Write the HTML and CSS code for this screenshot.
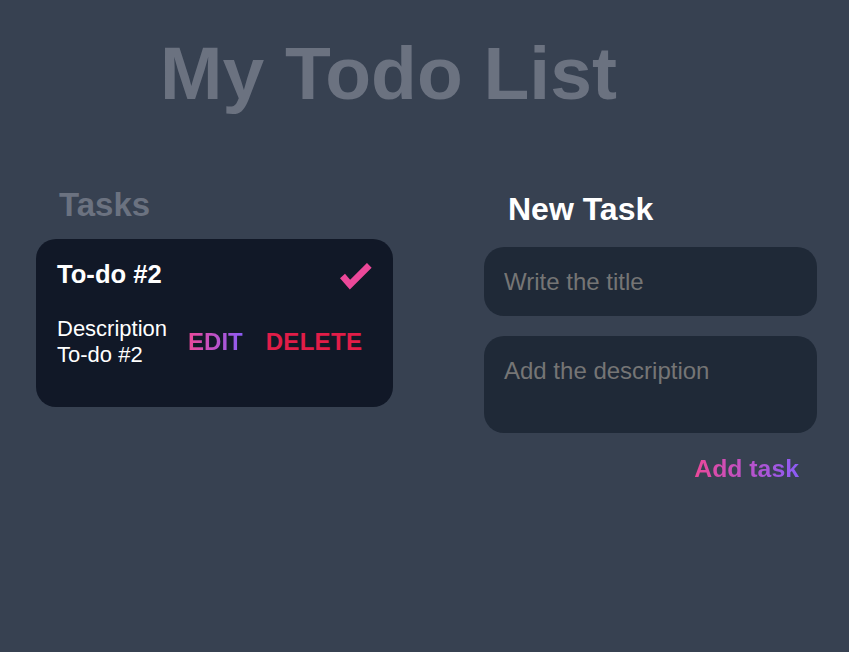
FILE: index.html
```html
<!DOCTYPE html>
<html lang="en">
<head>
<meta charset="utf-8">
<title>My Todo List</title>
<link rel="stylesheet" href="styles.css">
</head>
<body>
  <h1 class="app-title">My Todo List</h1>
  <main class="layout">
    <section class="tasks">
      <h2 class="tasks-heading">Tasks</h2>
      <article class="task-card">
        <div class="task-head">
          <h3 class="task-title">To-do #2</h3>
          <svg class="check" width="32" height="27" viewBox="0 0 32 27" aria-hidden="true">
            <polyline points="2.5,13 10,21.6 29.3,2.3" fill="none" stroke="#ec4899" stroke-width="6.6" stroke-linecap="butt" stroke-linejoin="miter"/>
          </svg>
        </div>
        <div class="task-body">
          <p class="task-desc">Description<br>To-do #2</p>
          <button class="btn-edit" type="button">EDIT</button>
          <button class="btn-delete" type="button">DELETE</button>
        </div>
      </article>
    </section>
    <section class="new-task">
      <h2 class="new-heading">New Task</h2>
      <input class="field field-title" type="text" placeholder="Write the title">
      <textarea class="field field-desc" placeholder="Add the description"></textarea>
      <div class="actions">
        <button class="btn-add" type="button">Add task</button>
      </div>
    </section>
  </main>
</body>
</html>
```

FILE: styles.css
```css
* { box-sizing: border-box; }

html, body {
  margin: 0;
  padding: 0;
  background: #374151;
  height: 100%;
}

body {
  font-family: "Liberation Sans", Arial, sans-serif;
  color: #ffffff;
}

.app-title {
  margin: 33px 0 0 160px;
  font-size: 75px;
  line-height: 80px;
  font-weight: 700;
  color: #6b7280;
}

.layout {
  display: flex;
  gap: 91px;
  padding-left: 36px;
  margin-top: 72px;
}

.tasks {
  width: 357px;
  display: flex;
  flex-direction: column;
}

.tasks-heading {
  margin: 0 0 14px 23px;
  font-size: 33px;
  line-height: 40px;
  font-weight: 700;
  color: #6b7280;
}

.task-card {
  background: #111827;
  border-radius: 20px;
  padding: 20px 21px 41px 21px;
  height: 168px;
}

.task-head {
  display: flex;
  align-items: center;
  justify-content: space-between;
}

.task-title {
  margin: 0;
  font-size: 25.6px;
  font-weight: 700;
  line-height: normal;
}

.check {
  display: block;
  margin-top: 4px;
}

.task-body {
  display: flex;
  align-items: center;
  margin-top: 26px;
}

.task-desc {
  margin: 0 21px 0 0;
  font-size: 22px;
  line-height: normal;
}

button {
  font-family: inherit;
  border: none;
  background: none;
  padding: 0;
  cursor: pointer;
}

.btn-edit {
  font-size: 24px;
  font-weight: 700;
  line-height: normal;
  background: linear-gradient(90deg, #ec4899, #8b5cf6);
  -webkit-background-clip: text;
  background-clip: text;
  color: transparent;
  margin-right: 23px;
}

.btn-delete {
  font-size: 24px;
  font-weight: 700;
  line-height: normal;
  color: #e11d48;
  letter-spacing: 0.3px;
}

.new-task {
  width: 333px;
  display: flex;
  flex-direction: column;
  padding-top: 4px;
}

.new-heading {
  margin: 0 0 18px 24px;
  font-size: 32px;
  line-height: 40px;
  font-weight: 700;
  color: #ffffff;
}

.field {
  display: block;
  width: 100%;
  background: #1f2937;
  border: none;
  outline: none;
  border-radius: 20px;
  font-family: inherit;
  font-size: 24px;
  color: #ffffff;
}

.field::placeholder {
  color: #757575;
}

.field-title {
  height: 69px;
  padding: 0 20px;
}

.field-desc {
  height: 97px;
  margin-top: 20px;
  padding: 21px 20px;
  line-height: normal;
  resize: none;
}

.actions {
  display: flex;
  justify-content: flex-end;
  margin-top: 21px;
  padding-right: 18px;
}

.btn-add {
  font-size: 24.8px;
  line-height: 30px;
  font-weight: 700;
  background: linear-gradient(90deg, #ec4899, #8b5cf6);
  -webkit-background-clip: text;
  background-clip: text;
  color: transparent;
}
```
